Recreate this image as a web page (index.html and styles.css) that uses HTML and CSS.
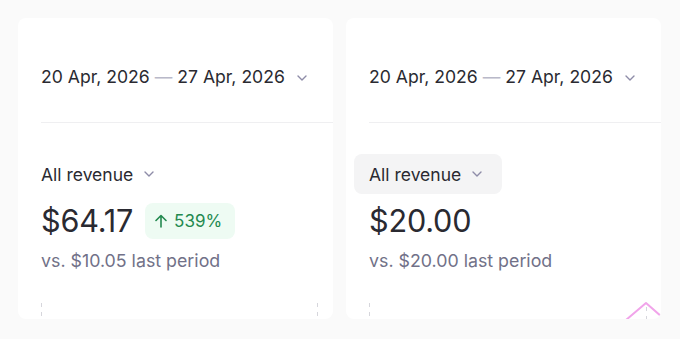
FILE: index.html
```html
<!DOCTYPE html>
<html lang="en">
<head>
    <meta charset="UTF-8">
    <meta name="viewport" content="width=device-width, initial-scale=1.0">
    <title>Revenue</title>
    <link rel="stylesheet" href="styles.css">
</head>
<body>
    <div class="cards">
        <!-- Left card -->
        <div class="card">
            <div class="date-range">
                <span>20 Apr, 2026</span>
                <span class="dash">—</span>
                <span>27 Apr, 2026</span>
                <svg class="chev" width="10" height="6" viewBox="0 0 10 6"><path d="M1 1l4 4 4-4" fill="none" stroke="currentColor" stroke-width="1.4" stroke-linecap="round" stroke-linejoin="round"/></svg>
            </div>
            <div class="divider"></div>
            <div class="metric">
                <button class="select">
                    All revenue
                    <svg class="chev" width="10" height="6" viewBox="0 0 10 6"><path d="M1 1l4 4 4-4" fill="none" stroke="currentColor" stroke-width="1.4" stroke-linecap="round" stroke-linejoin="round"/></svg>
                </button>
                <div class="value-row">
                    <span class="value">$64.17</span>
                    <span class="badge">
                        <svg width="12" height="14" viewBox="0 0 12 14"><path d="M6 13V1.5M1 6.5l5-5 5 5" fill="none" stroke="currentColor" stroke-width="1.6" stroke-linecap="round" stroke-linejoin="round"/></svg>
                        539%
                    </span>
                </div>
                <div class="compare">vs. $10.05 last period</div>
            </div>
            <svg class="chart" width="315" height="46" viewBox="0 0 315 46">
                <line x1="23.5" y1="30" x2="23.5" y2="46" stroke="#d6d6dc" stroke-width="1" stroke-dasharray="4 5"/>
                <line x1="299.5" y1="30" x2="299.5" y2="46" stroke="#d6d6dc" stroke-width="1" stroke-dasharray="4 5"/>
            </svg>
        </div>

        <!-- Right card -->
        <div class="card">
            <div class="date-range">
                <span>20 Apr, 2026</span>
                <span class="dash">—</span>
                <span>27 Apr, 2026</span>
                <svg class="chev" width="10" height="6" viewBox="0 0 10 6"><path d="M1 1l4 4 4-4" fill="none" stroke="currentColor" stroke-width="1.4" stroke-linecap="round" stroke-linejoin="round"/></svg>
            </div>
            <div class="divider"></div>
            <div class="metric">
                <button class="select active">
                    All revenue
                    <svg class="chev" width="10" height="6" viewBox="0 0 10 6"><path d="M1 1l4 4 4-4" fill="none" stroke="currentColor" stroke-width="1.4" stroke-linecap="round" stroke-linejoin="round"/></svg>
                </button>
                <div class="value-row">
                    <span class="value">$20.00</span>
                </div>
                <div class="compare">vs. $20.00 last period</div>
            </div>
            <svg class="chart" width="315" height="46" viewBox="0 0 315 46">
                <line x1="23.5" y1="30" x2="23.5" y2="46" stroke="#d6d6dc" stroke-width="1" stroke-dasharray="4 5"/>
                <line x1="300.5" y1="34" x2="300.5" y2="46" stroke="#d6d6dc" stroke-width="1" stroke-dasharray="4 5"/>
                <polyline points="280,47 300,30 316,44" fill="none" stroke="#f1a4ea" stroke-width="2" stroke-linejoin="round"/>
            </svg>
        </div>
    </div>
</body>
</html>
```

FILE: styles.css
```css
:root {
    --text-color: #2a2a31;
    --muted-color: #717188;
    --icon-color: #8e8ca8;
    --bg-color: #fafafa;
    --line-color: #efeff1;
}

body {
    margin: 0;
    padding: 18px;
    background-color: var(--bg-color);
    font-family: Inter, "Noto Sans", sans-serif;
    color: var(--text-color);
}

.cards {
    display: flex;
    gap: 13px;
}

.card {
    width: 315px;
    height: 301px;
    background: white;
    border-radius: 8px;
    overflow: hidden;
    flex-shrink: 0;
}

.date-range {
    display: flex;
    align-items: center;
    padding: 47px 0 33px 23px;
    font-size: 17.6px;
    line-height: 24px;
    white-space: nowrap;
}

.date-range .dash {
    color: #b9b9c9;
    margin: 0 5px;
}

.date-range .chev {
    margin-left: 12px;
    margin-top: 1px;
}

.chev {
    color: var(--icon-color);
    flex-shrink: 0;
}

.divider {
    height: 1px;
    margin-left: 23px;
    background: var(--line-color);
}

.metric {
    padding: 31px 0 0 8px;
}

.select {
    display: flex;
    align-items: center;
    gap: 11px;
    height: 40px;
    padding: 0 20px 0 15px;
    border: none;
    border-radius: 8px;
    background: transparent;
    font-family: inherit;
    font-size: 17.5px;
    color: var(--text-color);
}

.select.active {
    background: #f4f4f5;
}

.value-row {
    display: flex;
    align-items: center;
    gap: 12px;
    margin-top: 9px;
    padding-left: 15px;
    height: 36px;
}

.value {
    font-size: 30.6px;
    line-height: 36px;
    letter-spacing: -0.2px;
}

.badge {
    display: flex;
    align-items: center;
    gap: 7px;
    height: 36px;
    padding: 0 13px 0 10px;
    border-radius: 8px;
    background: #eefbf3;
    color: #23894f;
    font-size: 17px;
}

.compare {
    margin-top: 10px;
    padding-left: 15px;
    font-size: 17.8px;
    line-height: 24px;
    color: var(--muted-color);
}

.chart {
    display: block;
}
```
